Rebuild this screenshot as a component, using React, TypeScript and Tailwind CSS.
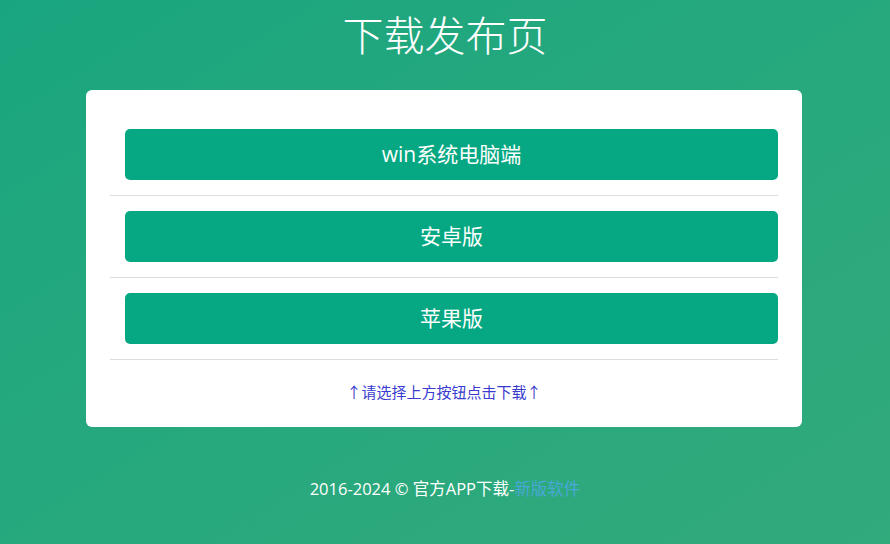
const rows = ['win系统电脑端', '安卓版', '苹果版'];

export default function App() {
  return (
    <div
      className="min-h-[544px] w-full bg-gradient-to-br from-[#19a67f] to-[#31aa7c] text-white"
      style={{ fontFamily: '"Open Sans", "Noto Sans CJK SC", sans-serif' }}
    >
      {/* Title */}
      <div className="pt-[8px] text-center">
        <h1 className="text-[41px] leading-[54px] font-light">下载发布页</h1>
      </div>

      {/* Card */}
      <div className="ml-[86px] mr-[88px] mt-[28px] rounded-[6px] bg-white px-[24px] pt-[24px]">
        {rows.map((name) => (
          <div key={name} className="border-b border-[#dddddd] py-[15px] pl-[15px]">
            <a
              href="#"
              className="flex h-[51px] items-center justify-center rounded-[5px] bg-[#05a882] text-[21px] text-white"
            >
              {name}
            </a>
          </div>
        ))}
        <div className="pt-[22px] pb-[25px] text-center text-[15px] leading-[20px] text-[#3a3ccf]">
          ↑请选择上方按钮点击下载↑
        </div>
      </div>

      {/* Footer */}
      <div className="mt-[50px] text-center text-[16.5px] leading-[24px]">
        2016-2024 © 官方APP下载-<a href="#" className="text-[#49a8d6]">新版软件</a>
      </div>
    </div>
  );
}
